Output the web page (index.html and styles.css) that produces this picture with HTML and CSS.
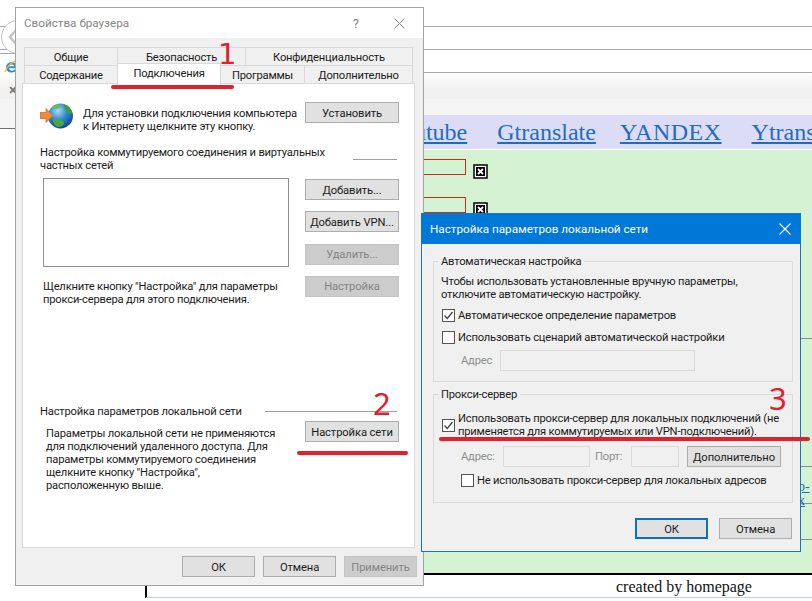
FILE: index.html
```html
<!DOCTYPE html>
<html lang="ru">
<head>
  <meta charset="UTF-8">
  <title>Свойства браузера</title>
  <link rel="stylesheet" href="styles.css">
</head>
<body>

  <!-- Browser chrome behind the dialogs -->
  <div class="chrome">
    <div class="chrome-line"></div>
    <div class="chrome-line"></div>
    <div class="chrome-fade"></div>
    <div class="chrome-bar"></div>
  </div>

  <div class="back-btn">
    <svg width="10" height="16" viewBox="0 0 10 16"><path d="M8 1 L2 8 L8 15" fill="none" stroke="#c4c4c4" stroke-width="2.4"/></svg>
  </div>
  <div class="browser-tab">
    <svg width="16" height="16" viewBox="0 0 16 16">
      <path d="M2 8.5a5.5 5.5 0 0 1 11 0v.7H5c.2 2.6 3.8 3.3 6.2 1.4h1.6C11.3 15 2 14.700 2 8.500z M5 7.200h5.300C10 4.800 5.400 4.800 5 7.200z" fill="#2f8fd8" fill-rule="evenodd"/>
      <path d="M1 13 C3 7 9 1.500 14 1.500 C16 2 15 5 13.500 7" fill="none" stroke="#e8b92e" stroke-width="1.300"/>
    </svg>
  </div>
  <span class="tab-close">×</span>

  <!-- Web page behind the dialogs -->
  <div class="page">
    <nav class="page-nav">
      <a href="#">Youtube</a>
      <a href="#">Gtranslate</a>
      <a href="#" class="nav-yandex">YANDEX</a>
      <a href="#">Ytranslate</a>
    </nav>
    <div class="page-body">
      <div class="page-row row-fields">
        <div class="field-line">
          <div class="red-box"></div>
          <svg class="x-icon" width="15" height="15" viewBox="0 0 15 15"><rect x="1" y="1" width="13" height="13" fill="#fff" stroke="#000" stroke-width="1.500"/><rect x="3" y="3" width="9" height="9"/><path d="M5 5 L10 10 M10 5 L5 10" stroke="#fff" stroke-width="1.800"/></svg>
        </div>
        <div class="field-line">
          <div class="red-box"></div>
          <svg class="x-icon" width="15" height="15" viewBox="0 0 15 15"><rect x="1" y="1" width="13" height="13" fill="#fff" stroke="#000" stroke-width="1.500"/><rect x="3" y="3" width="9" height="9"/><path d="M5 5 L10 10 M10 5 L5 10" stroke="#fff" stroke-width="1.800"/></svg>
        </div>
      </div>
      <div class="page-row row-b"></div>
      <div class="page-row row-c"><a href="#" class="row-link">р-х</a></div>
      <div class="page-row row-d"></div>
      <div class="page-row row-e"></div>
    </div>
    <div class="page-foot">created by homepage</div>
  </div>

  <!-- Internet properties dialog -->
  <section class="window props">
    <header class="props-title">
      <span>Свойства браузера</span>
      <span class="help">?</span>
      <svg class="props-close" width="11" height="11" viewBox="0 0 11 11"><path d="M0.500 0.500 L10.500 10.500 M10.500 0.500 L0.500 10.500" stroke="#8a8a8a" stroke-width="1"/></svg>
    </header>

    <div class="tabs">
      <div class="tab-row">
        <div class="tab w93">Общие</div>
        <div class="tab w128">Безопасность</div>
        <div class="tab w167">Конфиденциальность</div>
      </div>
      <div class="tab-row">
        <div class="tab w93">Содержание</div>
        <div class="tab tab-active">Подключения</div>
        <div class="tab w84">Программы</div>
        <div class="tab w108">Дополнительно</div>
      </div>
    </div>

    <div class="panel">
      <div class="setup">
        <svg class="globe" width="33" height="26" viewBox="0 0 33 26">
          <defs>
            <radialGradient id="sea" cx="40%" cy="30%" r="75%">
              <stop offset="0" stop-color="#a9dcf5"/>
              <stop offset="0.5" stop-color="#2b86cc"/>
              <stop offset="1" stop-color="#123f86"/>
            </radialGradient>
          </defs>
          <circle cx="20.500" cy="13" r="12.500" fill="url(#sea)"/>
          <path d="M24 1.500c4 1 7 4 8 8-1 3-3 2-4 0-2-1-4-4-4-8z" fill="#3f9a3c"/>
          <path d="M13 16c4-1 8 0 11 3 1 2-2 5-6 5-3-1-5-4-5-8z" fill="#4aa53f"/>
          <path d="M12 4c3-2 7-2 9-1-1 2-4 3-7 3z" fill="#6dbb55"/>
          <path d="M0 9.500h6V5.500l7 7-7 7v-4H0z" fill="#f08a3c" stroke="#c9692a" stroke-width="0.700"/>
        </svg>
        <p class="setup-text">Для установки подключения компьютера<br>к Интернету щелкните эту кнопку.</p>
        <button class="btn btn-side">Установить</button>
      </div>

      <div class="heading heading-dial">
        <span class="heading-text">Настройка коммутируемого соединения и виртуальных<br>частных сетей</span>
        <span class="heading-rule rule-short"></span>
      </div>

      <div class="dial-grid">
        <div class="dial-left">
          <div class="list-box"></div>
          <p class="dial-note">Щелкните кнопку "Настройка" для параметры<br>прокси-сервера для этого подключения.</p>
        </div>
        <div class="dial-right">
          <button class="btn btn-side">Добавить...</button>
          <button class="btn btn-side">Добавить VPN...</button>
          <button class="btn btn-side" disabled>Удалить...</button>
          <button class="btn btn-side" disabled>Настройка</button>
        </div>
      </div>

      <div class="heading heading-lan">
        <span class="heading-text">Настройка параметров локальной сети</span>
        <span class="heading-rule rule-long"></span>
      </div>

      <div class="lan-row">
        <p class="lan-note">Параметры локальной сети не применяются<br>для подключений удаленного доступа. Для<br>параметры коммутируемого соединения<br>щелкните кнопку "Настройка",<br>расположенную выше.</p>
        <button class="btn btn-side">Настройка сети</button>
      </div>
    </div>

    <div class="window-foot props-foot">
      <button class="btn btn-foot">ОК</button>
      <button class="btn btn-foot">Отмена</button>
      <button class="btn btn-foot" disabled>Применить</button>
    </div>
  </section>

  <!-- LAN settings dialog -->
  <section class="window lan">
    <header class="lan-title">
      <span>Настройка параметров локальной сети</span>
      <svg width="12" height="12" viewBox="0 0 12 12"><path d="M0.500 0.500 L11.500 11.500 M11.500 0.500 L0.500 11.500" stroke="#fff" stroke-width="1.100"/></svg>
    </header>

    <div class="lan-body">
      <fieldset class="group group-auto">
        <legend>Автоматическая настройка</legend>
        <p>Чтобы использовать установленные вручную параметры,<br>отключите автоматическую настройку.</p>
        <label class="check-row check-first">
          <span class="check"><svg width="13" height="13" viewBox="0 0 13 13"><path d="M2.500 6.500 L5.300 9.500 L10.500 3" fill="none" stroke="#444" stroke-width="1.300"/></svg></span>
          Автоматическое определение параметров
        </label>
        <label class="check-row">
          <span class="check"></span>
          Использовать сценарий автоматической настройки
        </label>
        <div class="addr-row">
          <span class="addr-label label-auto">Адрес</span>
          <input class="addr-input w195" type="text" disabled>
        </div>
      </fieldset>

      <fieldset class="group group-proxy">
        <legend>Прокси-сервер</legend>
        <label class="check-row check-wrap">
          <span class="check"><svg width="13" height="13" viewBox="0 0 13 13"><path d="M2.500 6.500 L5.300 9.500 L10.500 3" fill="none" stroke="#444" stroke-width="1.300"/></svg></span>
          <span>Использовать прокси-сервер для локальных подключений (не<br>применяется для коммутируемых или VPN-подключений).</span>
        </label>
        <div class="addr-row proxy-addr">
          <span class="addr-label label-a">Адрес:</span>
          <input class="addr-input w87" type="text" disabled>
          <span class="addr-label label-p">Порт:</span>
          <input class="addr-input w48" type="text" disabled>
          <button class="btn btn-side btn-more">Дополнительно</button>
        </div>
        <label class="check-row check-bypass">
          <span class="check"></span>
          Не использовать прокси-сервер для локальных адресов
        </label>
      </fieldset>

      <div class="window-foot lan-foot">
        <button class="btn btn-foot btn-default">ОК</button>
        <button class="btn btn-foot">Отмена</button>
      </div>
    </div>
  </section>

  <!-- Red hand-drawn annotations -->
  <span class="mark mark-1">1</span>
  <span class="mark mark-2">2</span>
  <span class="mark mark-3">3</span>
  <div class="stroke stroke-1"></div>
  <div class="stroke stroke-2"></div>
  <div class="stroke stroke-3"></div>

</body>
</html>
```

FILE: styles.css
```css
* {
  box-sizing: border-box;
  margin: 0;
  padding: 0;
}

body {
  width: 812px;
  height: 601px;
  overflow: hidden;
  position: relative;
  background: #ffffff;
  font-family: Roboto, sans-serif;
  font-size: 11.2px;
  letter-spacing: -0.2px;
  line-height: 13px;
  color: #1c1c1c;
}

/* browser chrome */
.chrome {
  height: 106px;
  padding-top: 26px;
}

.chrome-line {
  height: 23px;
  border-top: 1px solid #a9a9a9;
}

.chrome-fade {
  height: 27px;
  border-top: 1px solid #a9a9a9;
  background: linear-gradient(#ffffff, #f0f0f0 60%);
}

.chrome-bar {
  height: 30px;
  background: #f5f5f5;
  border-bottom: 1px solid #707070;
}

.back-btn {
  position: absolute;
  left: 1px;
  top: 20px;
  width: 34px;
  height: 34px;
  border: 1px solid #c4c4c4;
  border-radius: 50%;
  background: #ffffff;
  padding: 8px 0 0 6px;
}

.browser-tab {
  position: absolute;
  left: 0;
  top: 53px;
  width: 20px;
  height: 24px;
  background: #ffffff;
  border-top: 1px solid #a9a9a9;
  padding: 5px 0 0 4px;
}

.tab-close {
  position: absolute;
  left: 9px;
  top: 84px;
  font-size: 15px;
  font-weight: bold;
  color: #777777;
}

/* web page */
.page {
  margin-left: 145px;
  padding-top: 9px;
  font-family: "Liberation Serif", serif;
  letter-spacing: normal;
  overflow: hidden;
}

.page-nav {
  height: 34px;
  margin-left: 2px;
  padding-left: 240px;
  display: flex;
  gap: 30px;
  align-items: center;
  white-space: nowrap;
  overflow: hidden;
  background: #dcdcf6;
  font-size: 24px;
  line-height: 30px;
}

.page-nav a {
  color: #1f6dbd;
}

.nav-yandex {
  margin-left: -6px;
  letter-spacing: 0.5px;
}

.page-body {
  height: 423px;
  margin: 1px 0 0 2px;
  background: #d5f3d3;
}

.page-row {
  border-bottom: 1px solid #8c8c8c;
}

.row-fields {
  height: 189px;
  padding: 9px 0 0 163px;
  display: flex;
  flex-direction: column;
  gap: 18px;
}

.row-b { height: 128px; }
.row-c { height: 37px; padding: 13px 0 0 651px; }
.row-d { height: 36px; }
.row-e { height: 33px; border-bottom: none; }

.field-line {
  display: flex;
  gap: 7px;
}

.red-box {
  width: 156px;
  height: 16px;
  border: 1px solid #c62f1f;
}

.x-icon {
  margin-top: 5px;
}

.row-link {
  color: #1f6dbd;
  font-size: 14px;
}

.page-foot {
  border-top: 2px solid #000000;
  border-left: 2px solid #000000;
  border-bottom: 1px solid #b9d5e2;
  height: 25px;
  padding: 3px 0 0 469px;
  font-size: 16px;
  line-height: 18px;
  color: #111111;
}

/* dialogs */
.window {
  position: absolute;
  background: #f0f0f0;
}

.btn {
  font-family: inherit;
  font-size: 11.2px;
  letter-spacing: -0.1px;
  height: 21px;
  padding-top: 1px;
  background: #e1e1e1;
  border: 1px solid #adadad;
  color: #1c1c1c;
  white-space: nowrap;
}

.btn:disabled {
  background: #cccccc;
  border-color: #c4c4c4;
  color: #858585;
}

.btn-side {
  width: 94px;
  flex: none;
}

.btn-foot {
  width: 73px;
}

.btn-default {
  border: 2px solid #0f70bd;
}

.window-foot {
  display: flex;
  justify-content: flex-end;
}

/* internet properties */
.props {
  left: 15px;
  top: 7px;
  width: 409px;
  height: 579px;
  border: 1px solid #a3a3a3;
}

.props-title {
  height: 30px;
  background: #ffffff;
  display: flex;
  align-items: center;
  padding-left: 8px;
  font-size: 11.7px;
  letter-spacing: 0;
  color: #868686;
}

.help {
  margin-left: auto;
  font-size: 13px;
}

.props-close {
  margin: 0 18px 0 35px;
}

.tabs {
  margin: 9px 0 0 8px;
}

.tab-row {
  display: flex;
  height: 18px;
}

.tab {
  height: 19px;
  text-align: center;
  line-height: 19px;
  color: #1c1c1c;
  border: 1px solid #d9d9d9;
  border-bottom: none;
  margin-right: -1px;
}

.w93 { width: 94px; }
.w128 { width: 129px; }
.w167 { width: 168px; }
.w84 { width: 85px; }
.w108 { width: 109px; }

.tab-active {
  position: relative;
  z-index: 1;
  width: 104px;
  height: 23px;
  margin-top: -2px;
  background: #ffffff;
}

.panel {
  position: relative;
  height: 465px;
  margin: 0 8px 0 6px;
  padding: 18px 15px 0 17px;
  background: #ffffff;
  border: 1px solid #d9d9d9;
}

.setup {
  display: flex;
  height: 31px;
}

.globe {
  flex: none;
  margin-top: 1px;
}

.setup-text {
  margin: 5px 0 0 10px;
  white-space: nowrap;
}

.setup .btn {
  margin-left: auto;
}

.heading {
  display: flex;
  justify-content: space-between;
  align-items: center;
}

.heading-dial {
  margin-top: 13px;
}

.heading-lan {
  margin-top: 99px;
}

.heading-rule {
  height: 1px;
  background: #a0a0a0;
  margin-right: 2px;
}

.rule-short { width: 44px; }
.rule-long { width: 132px; }

.dial-grid {
  display: grid;
  grid-template-columns: 246px 94px;
  column-gap: 16px;
  margin: 6px 0 0 3px;
}

.list-box {
  height: 89px;
  border: 1px solid #8f8f8f;
  background: #ffffff;
}

.dial-note {
  margin-top: 13px;
  white-space: nowrap;
}

.dial-right {
  display: flex;
  flex-direction: column;
  gap: 11.3px;
  padding-top: 1px;
}

.lan-row {
  display: flex;
  justify-content: space-between;
  margin-top: 3px;
}

.lan-note {
  margin: 6px 0 0 6px;
}

.props-foot {
  gap: 8px;
  margin-top: 8px;
  padding-right: 6px;
}

/* LAN settings */
.lan {
  left: 421px;
  top: 213px;
  width: 380px;
  height: 339px;
  border: 1px solid #0f78c8;
}

.lan-title {
  height: 30px;
  background: #0078d7;
  color: #ffffff;
  font-size: 11.7px;
  letter-spacing: 0;
  display: flex;
  align-items: center;
  justify-content: space-between;
  padding: 0 9px 0 8px;
}

.lan-body {
  padding: 11px 7px 0 11px;
}

.group {
  border: 1px solid #dcdcdc;
  padding: 7px 8px 10px 7px;
}

.group legend {
  margin-left: -3px;
  padding: 0 3px;
}

.group-proxy {
  margin-top: 6px;
  padding-top: 11px;
  padding-bottom: 14px;
}

.check-row {
  display: flex;
  gap: 3px;
  align-items: center;
  margin-top: 7px;
  margin-left: 1px;
  height: 15px;
  white-space: nowrap;
}

.check-wrap {
  height: 26px;
  margin-top: 0;
}

.check-bypass {
  margin: 6px 0 0 20px;
}

.check {
  flex: none;
  width: 13px;
  height: 13px;
  border: 1px solid #555555;
  background: #ffffff;
  display: flex;
  align-items: center;
  justify-content: center;
}

.check svg {
  flex: none;
}

.addr-row {
  display: flex;
  align-items: center;
  margin: 5px 0 0 20px;
}

.proxy-addr {
  margin-top: 8px;
}

.addr-label {
  color: #8f8f8f;
  flex: none;
}

.label-auto { width: 39px; }
.label-a { width: 42px; }
.label-p { width: 36px; margin-left: 5px; }

.addr-input {
  height: 21px;
  border: 1px solid #dadada;
  background: #f0f0f0;
}

.w195 { width: 195px; }
.w87 { width: 87px; }
.w48 { width: 48px; }
.btn-more { margin-left: 8px; }

.lan-foot {
  gap: 11px;
  margin-top: 15px;
  padding-right: 1px;
}

/* annotations */
.mark {
  position: absolute;
  z-index: 5;
  font-family: "Noto Sans", sans-serif;
  font-size: 31px;
  line-height: 24px;
  letter-spacing: 0;
  color: #e0222e;
}

.mark-1 { left: 218px; top: 42px; font-family: "DejaVu Sans", sans-serif; font-size: 29px; }
.mark-2 { left: 373px; top: 391px; }
.mark-3 { left: 769px; top: 386px; }

.stroke {
  position: absolute;
  z-index: 5;
  height: 4px;
  border-radius: 2px;
  background: #e0222e;
}

.stroke-1 { left: 111px; top: 85px; width: 123px; }
.stroke-2 { left: 297px; top: 451px; width: 111px; }
.stroke-3 { left: 439px; top: 437px; width: 371px; }
```
